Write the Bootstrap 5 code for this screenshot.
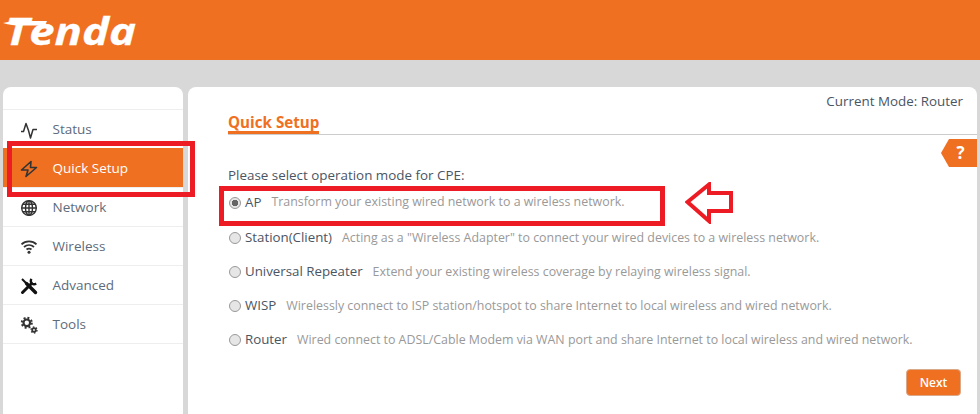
<!DOCTYPE html>
<html lang="en">
<head>
<meta charset="utf-8">
<title>Tenda Quick Setup</title>
<link href="https://cdn.jsdelivr.net/npm/bootstrap@5.3.0/dist/css/bootstrap.min.css" rel="stylesheet">
<style>
html,body{height:414px;overflow:hidden}
body{background:#d8d8d8;font-family:"Open Sans","Noto Sans",sans-serif;font-size:13.4px;color:#444;position:relative}
.top-band{height:60px;background:#ef7021;padding:10px 0 0 3px}
.top-band svg{display:block;overflow:visible}
.logo-word{font-family:"Open Sans",sans-serif;font-weight:700;font-style:italic;fill:#fff;stroke:#fff;stroke-width:.3}
.page-area{height:354px;padding:27px 3px 0;gap:5px}
.side-panel{width:180px;flex:none;background:#fff;border-radius:8px 8px 0 0;padding-top:22px}
.menu-row{height:39px;border-top:1px solid #eee;padding:1px 0 0 17px;color:#5d6b7c;gap:14.500px;font-size:13.500px}
.menu-row svg{width:18px;height:18px;flex:none;color:#333}
.menu-row.on{background:#ef7021;color:#fff;border-top-color:#ef7021}
.menu-end{border-top:1px solid #eee}
.main-panel{flex:1;background:#fff;border-radius:8px 8px 0 0;padding:0 0 0 40px;position:relative}
.mode-line{height:28px;padding-right:14px;line-height:28px;color:#4a5563;text-align:right}
.title-bar{height:20px;border-bottom:1px solid #ccc}
.title-text{height:19px;font-size:15.200px;font-weight:700;color:#ef7021;border-bottom:3px solid #ef7021;line-height:14px}
.help-tag{position:absolute;top:52px;right:0;width:36px;height:28px;background:#ef7021;color:#fff;font-weight:700;font-size:17px;line-height:27px;text-align:center;padding-left:3px;clip-path:polygon(8px 0,100% 0,100% 100%,8px 100%,0 50%)}
.ask-line{margin-top:30px;height:20px;line-height:20px;color:#4a5563}
.opt-row{height:34px;gap:4px;white-space:nowrap}
.opt-row.first{height:35px;margin-bottom:1px}
.opt-row .form-check-input{width:12px;height:12px;margin:0 0 0 1px;flex:none;border:1px solid #999;background-color:#e6e6e6;opacity:1}
.opt-row .form-check-input:checked{background-color:#e6e6e6;border-color:#999;background-image:radial-gradient(circle,#666 0,#666 3px,transparent 3.500px)}
.opt-name{color:#4a5563;margin-right:6px;font-size:13.300px}
.opt-desc{color:#999;font-size:12.400px}
.next-btn{position:absolute;left:718px;top:282px;width:55px;height:27px;padding:0;background:#ef7021;border:1px solid #d9a98a;border-radius:4px;color:#fff;font-size:12px;font-weight:600;line-height:25px}
.mark-box{position:absolute;border:5px solid #ed1c24;pointer-events:none}
.mark-a{left:7px;top:141px;width:188px;height:56px}
.mark-b{left:219px;top:186px;width:446px;height:40px}
.mark-arrow{position:absolute;left:685px;top:182px}
</style>
</head>
<body>
<header class="top-band">
<svg width="136" height="42" viewBox="0 0 136 42" role="img" aria-label="Tenda"><path d="M0 13c6-1.500 14-2 24-2h20l-2 4.500H22l-4 0C12 15.500 6 15 0 13z" fill="#fff"/><text class="logo-word" x="2" y="35" font-size="37" textLength="131" lengthAdjust="spacingAndGlyphs">Tenda</text></svg>
</header>
<div class="page-area d-flex">
<nav class="side-panel">
<a class="menu-row d-flex align-items-center text-decoration-none"><svg viewBox="0 0 18 18" fill="none" stroke="currentColor" stroke-width="1.500" stroke-linejoin="round"><path d="M1 10.500h2.500L6 2.500l2.500 7L10.500 17l2.500-8.500h4"/></svg>Status</a>
<a class="menu-row on d-flex align-items-center text-decoration-none"><svg viewBox="0 0 18 18" fill="none" stroke="currentColor" stroke-width="1.600" stroke-linejoin="round"><path d="M11 1.500 1.500 10h6.500l-2 6.500L16.500 7.500H10.500z"/></svg>Quick Setup</a>
<a class="menu-row d-flex align-items-center text-decoration-none"><svg viewBox="0 0 18 18" fill="none" stroke="currentColor" stroke-width="1.400"><circle cx="9" cy="9" r="7.300"/><ellipse cx="9" cy="9" rx="3.500" ry="7.300"/><path d="M9 1.500v15M1.500 9h15M2.500 5.300h13M2.500 12.700h13"/></svg>Network</a>
<a class="menu-row d-flex align-items-center text-decoration-none"><svg viewBox="0 0 18 18" fill="none" stroke="currentColor" stroke-width="1.800"><path d="M1.500 6.300c4-4 11-4 15 0M4 9c3-2.600 7-2.600 10 0M6.500 11.500c1.500-1.100 3.500-1.100 5 0"/><circle cx="9" cy="14.300" r="1.500" fill="currentColor" stroke="none"/></svg>Wireless</a>
<a class="menu-row d-flex align-items-center text-decoration-none"><svg viewBox="0 0 18 18" fill="none" stroke="#111"><path d="M2 2l5 5" stroke-width="2"/><path d="M6.500 6.500l9 9" stroke-width="3.400" stroke-linecap="round"/><path d="M2.500 15.500l9-9" stroke-width="3" stroke-linecap="round"/><path d="M11.500 1.800a3.600 3.600 0 0 0 .3 4.500 3.600 3.600 0 0 0 4.400.2" stroke-width="2.300"/></svg>Advanced</a>
<a class="menu-row d-flex align-items-center text-decoration-none"><svg viewBox="0 0 18 18" fill="none" stroke="#333"><circle cx="6.800" cy="6.800" r="3.300" stroke-width="2.200"/><circle cx="6.800" cy="6.800" r="5" stroke-width="2" stroke-dasharray="2 1.930"/><circle cx="14" cy="14" r="1.800" stroke-width="1.800"/><circle cx="14" cy="14" r="3" stroke-width="1.300" stroke-dasharray="1.500 1.640"/></svg>Tools</a>
<div class="menu-end"></div>
</nav>
<main class="main-panel">
<div class="mode-line">Current Mode: Router</div>
<div class="title-bar d-flex"><span class="title-text">Quick Setup</span></div>
<div class="help-tag">?</div>
<div class="ask-line">Please select operation mode for CPE:</div>
<label class="opt-row first d-flex align-items-center"><input class="form-check-input" type="radio" name="mode" checked><span class="opt-name">AP</span><span class="opt-desc">Transform your existing wired network to a wireless network.</span></label>
<label class="opt-row d-flex align-items-center"><input class="form-check-input" type="radio" name="mode"><span class="opt-name">Station(Client)</span><span class="opt-desc">Acting as a "Wireless Adapter" to connect your wired devices to a wireless network.</span></label>
<label class="opt-row d-flex align-items-center"><input class="form-check-input" type="radio" name="mode"><span class="opt-name">Universal Repeater</span><span class="opt-desc">Extend your existing wireless coverage by relaying wireless signal.</span></label>
<label class="opt-row d-flex align-items-center"><input class="form-check-input" type="radio" name="mode"><span class="opt-name">WISP</span><span class="opt-desc">Wirelessly connect to ISP station/hotspot to share Internet to local wireless and wired network.</span></label>
<label class="opt-row d-flex align-items-center"><input class="form-check-input" type="radio" name="mode"><span class="opt-name">Router</span><span class="opt-desc">Wired connect to ADSL/Cable Modem via WAN port and share Internet to local wireless and wired network.</span></label>
<button class="btn next-btn" type="button">Next</button>
</main>
</div>
<div class="mark-box mark-a"></div>
<div class="mark-box mark-b"></div>
<svg class="mark-arrow" width="48" height="42" viewBox="0 0 48 42" fill="none"><path d="M2.500 20 24 2.500V11h22v18H24v10z" stroke="#ed1c24" stroke-width="4" stroke-linejoin="miter"/></svg>
</body>
</html>
